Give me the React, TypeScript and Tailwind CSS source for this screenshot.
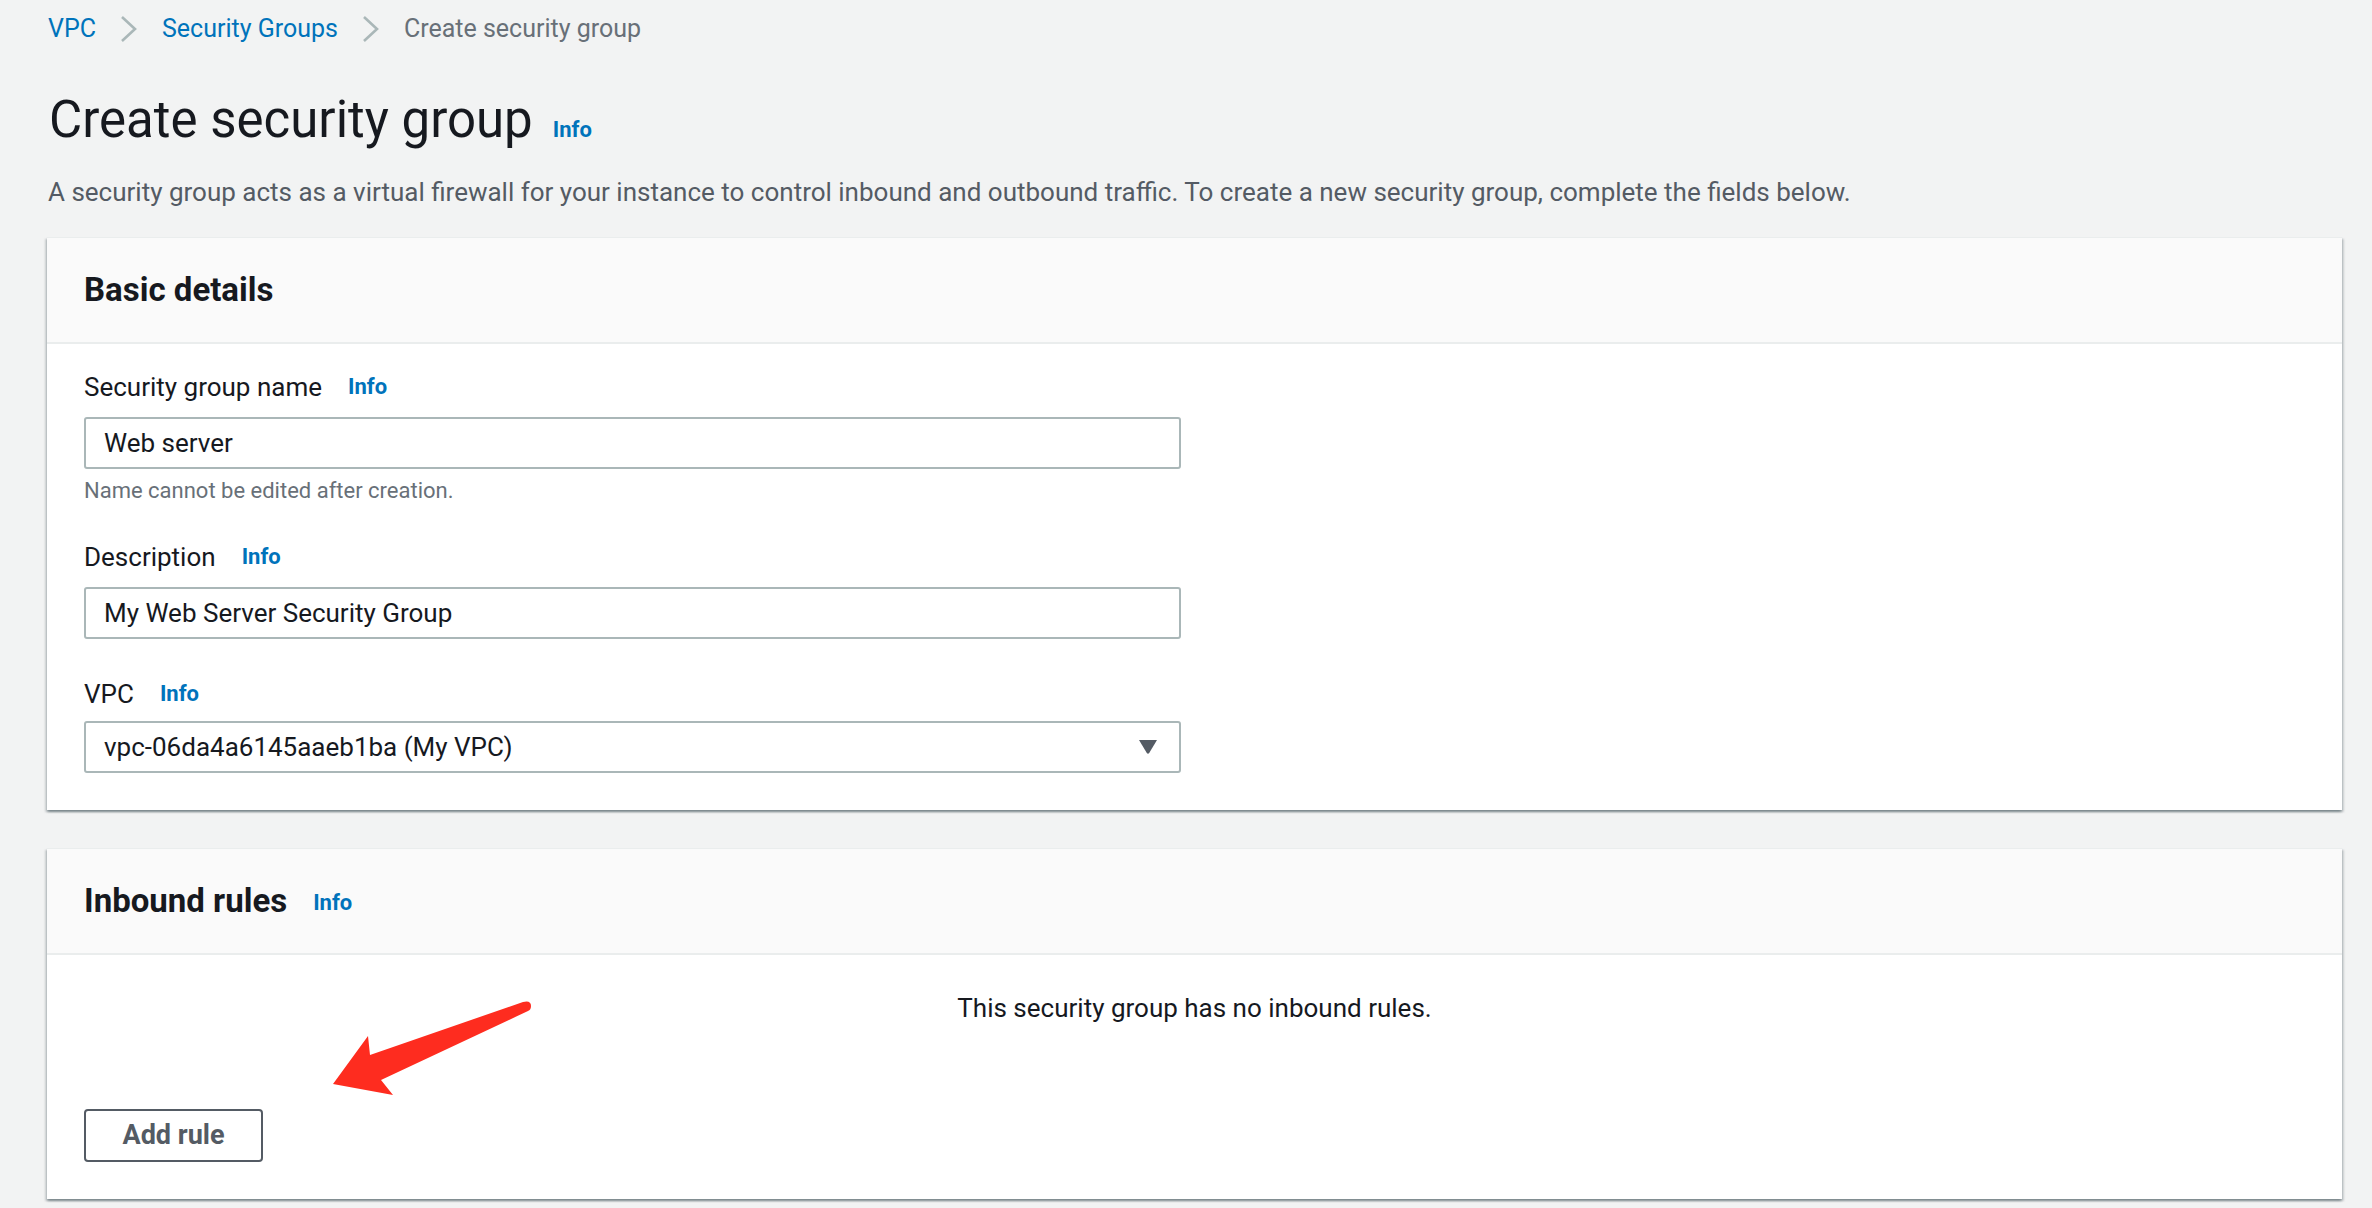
import React from 'react'

const Info = () => (
  <span className="text-[22px] font-bold text-[#0073bb] leading-none">Info</span>
)

const Chevron = () => (
  <svg width="18" height="26" viewBox="0 0 18 26" className="shrink-0">
    <polyline points="2,1 15,13 2,25" fill="none" stroke="#aab7b8" strokeWidth="2.6" />
  </svg>
)

function FieldLabel({ text }: { text: string }) {
  return (
    <div className="flex h-[30px] items-center gap-[26px]">
      <span className="text-[26px] text-[#16191f]">{text}</span>
      <Info />
    </div>
  )
}

function TextInput({ value }: { value: string }) {
  return (
    <div className="flex h-[52px] w-[1097px] items-center rounded-[3px] border-2 border-[#aab7b8] bg-white pl-[18px] text-[26px] text-[#16191f]">
      {value}
    </div>
  )
}

function CardHeader({ title }: { title: string }) {
  return (
    <div className="flex h-[106px] items-center gap-[26px] border-b-2 border-[#eaeded] bg-[#fafafa] px-[37px]">
      <h2 className="text-[33px] font-bold text-[#16191f]">{title}</h2>
      {title === 'Inbound rules' && (
        <span className="pt-[6px]">
          <Info />
        </span>
      )}
    </div>
  )
}

const cardClass =
  'bg-white border-t border-[#eaeded] shadow-[0_2px_2px_0_rgba(0,28,36,0.3),2px_2px_2px_0_rgba(0,28,36,0.15),-2px_2px_2px_0_rgba(0,28,36,0.15)]'

export default function App() {
  return (
    <div className="relative min-h-screen bg-[#f2f3f3] pl-[47px] pr-[30px] pb-[10px] font-['Roboto','Liberation_Sans',sans-serif]">
      {/* breadcrumb */}
      <nav className="flex h-[58px] items-center gap-[24px] pl-[1px] text-[25px]">
        <span className="text-[#0073bb]">VPC</span>
        <Chevron />
        <span className="text-[#0073bb]">Security Groups</span>
        <Chevron />
        <span className="text-[#687078]">Create security group</span>
      </nav>

      {/* title */}
      <div className="mt-[31px] flex h-[62px] items-baseline gap-[20px] pl-[2px]">
        <h1 className="text-[51px] leading-[62px] text-[#16191f]">Create security group</h1>
        <Info />
      </div>
      <p className="mt-[23px] h-[36px] pl-[1px] text-[26px] leading-[36px] text-[#545b64]">
        A security group acts as a virtual firewall for your instance to control inbound and outbound traffic. To create a new security group, complete the fields below.
      </p>

      {/* basic details */}
      <section className={`mt-[27px] ${cardClass}`}>
        <CardHeader title="Basic details" />
        <div className="px-[37px] pt-[28px] pb-[37px]">
          <FieldLabel text="Security group name" />
          <div className="mt-[15px]">
            <TextInput value="Web server" />
          </div>
          <div className="mt-[9px] flex h-[24px] items-center text-[22px] text-[#687078]">
            Name cannot be edited after creation.
          </div>

          <div className="mt-[40px]">
            <FieldLabel text="Description" />
          </div>
          <div className="mt-[15px]">
            <TextInput value="My Web Server Security Group" />
          </div>

          <div className="mt-[40px]">
            <FieldLabel text="VPC" />
          </div>
          <div className="mt-[12px] flex h-[52px] w-[1097px] items-center justify-between rounded-[3px] border-2 border-[#aab7b8] bg-white pl-[18px] pr-[22px] text-[26px] text-[#16191f]">
            <span>vpc-06da4a6145aaeb1ba (My VPC)</span>
            <svg width="18" height="14" viewBox="0 0 18 14">
              <path d="M0 0 H18 L10.2 13 Q9 14.6 7.8 13 Z" fill="#545b64" />
            </svg>
          </div>
        </div>
      </section>

      {/* inbound rules */}
      <section className={`mt-[38px] ${cardClass}`}>
        <CardHeader title="Inbound rules" />
        <div className="px-[37px] pt-[38px] pb-[37px]">
          <div className="flex h-[30px] items-center justify-center text-[26px] text-[#16191f]">
            This security group has no inbound rules.
          </div>
          <button className="mt-[86px] flex h-[53px] w-[179px] items-center justify-center rounded-[4px] border-2 border-[#545b64] bg-white text-[27px] font-bold text-[#545b64]">
            Add rule
          </button>
        </div>
      </section>

      {/* annotation arrow */}
      <svg
        className="pointer-events-none absolute left-[320px] top-[990px]"
        width="220"
        height="115"
        viewBox="320 990 220 115"
      >
        <path
          d="M333 1084 L368 1036 L370 1055 L523 1002 Q531 1000 531 1006 Q531 1010 528 1011 L381 1080 L393 1095 Z"
          fill="#fe2c1f"
        />
      </svg>
    </div>
  )
}
